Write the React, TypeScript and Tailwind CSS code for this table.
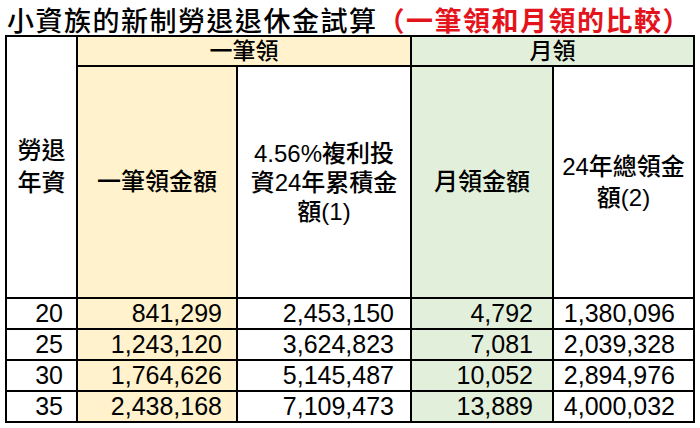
const rows = [
  ["20", "841,299", "2,453,150", "4,792", "1,380,096"],
  ["25", "1,243,120", "3,624,823", "7,081", "2,039,328"],
  ["30", "1,764,626", "5,145,487", "10,052", "2,894,976"],
  ["35", "2,438,168", "7,109,473", "13,889", "4,000,032"],
];

const cjk = "font-['Noto_Sans_CJK_TC',sans-serif]";
const num = "font-['Liberation_Sans','Noto_Sans_CJK_TC',sans-serif]";

const App = () => {
  return (
    <div className="w-[700px] h-[428px] bg-white pl-[5px] pt-[4px]">
      <div className={`h-[31px] leading-[31px] text-[27px] font-medium text-black whitespace-nowrap tracking-[1.5px] pl-[2px] ${cjk}`}>
        小資族的新制勞退退休金試算
        <span className="font-bold text-[#e3141c]">（一筆領和月領的比較）</span>
      </div>
      <table className={`table-fixed border-collapse w-[690px] text-black text-[24px] ${num}`}>
        <colgroup>
          <col className="w-[71px]" />
          <col className="w-[160px]" />
          <col className="w-[174px]" />
          <col className="w-[142px]" />
          <col className="w-[141px]" />
        </colgroup>
        <thead>
          <tr className="h-[30px]">
            <th rowSpan={2} className="border-2 border-black font-medium align-middle leading-[32px]">
              勞退
              <br />
              年資
            </th>
            <th colSpan={2} className="border-2 border-black bg-[#fff2cc] font-medium text-[23px] leading-[26px]">
              一筆領
            </th>
            <th colSpan={2} className="border-2 border-black bg-[#e2efda] font-medium text-[23px] leading-[26px]">
              月領
            </th>
          </tr>
          <tr className="h-[232px]">
            <th className="border-2 border-black bg-[#fff2cc] font-medium">一筆領金額</th>
            <th className="border-2 border-black font-medium leading-[29px] px-[2px]">
              4.56%複利投
              <br />
              資24年累積金
              <br />
              額(1)
            </th>
            <th className="border-2 border-black bg-[#e2efda] font-medium">月領金額</th>
            <th className="border-2 border-black font-medium leading-[31px]">
              24年總領金
              <br />
              額(2)
            </th>
          </tr>
        </thead>
        <tbody className="text-[25px] leading-[27px]">
          {rows.map((r) => (
            <tr key={r[0]} className="h-[31px]">
              <td className="border-2 border-black text-right pr-[13px]">{r[0]}</td>
              <td className="border-2 border-black bg-[#fff2cc] text-right pr-[14px]">{r[1]}</td>
              <td className="border-2 border-black text-right pr-[16px]">{r[2]}</td>
              <td className="border-2 border-black bg-[#e2efda] text-right pr-[19px]">{r[3]}</td>
              <td className="border-2 border-black text-right pr-[18px]">{r[4]}</td>
            </tr>
          ))}
        </tbody>
      </table>
    </div>
  );
};

export default App;
